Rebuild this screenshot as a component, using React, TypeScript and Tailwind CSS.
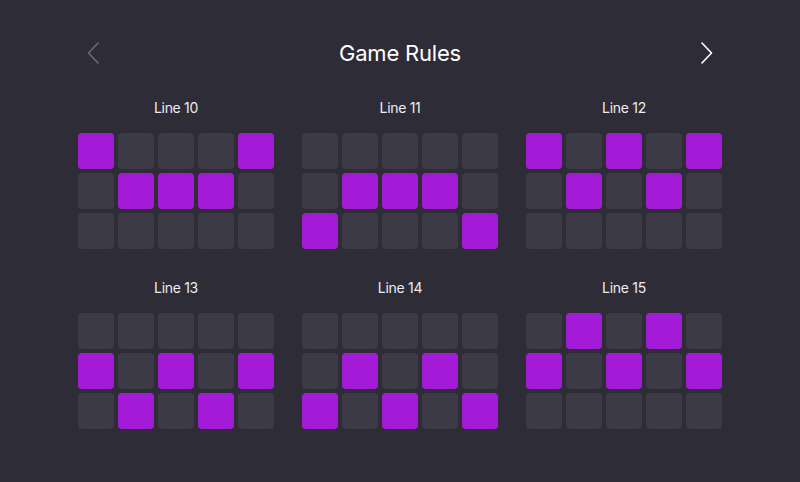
import React from 'react';

const lines: { name: string; rows: number[][] }[] = [
  { name: 'Line 10', rows: [[1, 0, 0, 0, 1], [0, 1, 1, 1, 0], [0, 0, 0, 0, 0]] },
  { name: 'Line 11', rows: [[0, 0, 0, 0, 0], [0, 1, 1, 1, 0], [1, 0, 0, 0, 1]] },
  { name: 'Line 12', rows: [[1, 0, 1, 0, 1], [0, 1, 0, 1, 0], [0, 0, 0, 0, 0]] },
  { name: 'Line 13', rows: [[0, 0, 0, 0, 0], [1, 0, 1, 0, 1], [0, 1, 0, 1, 0]] },
  { name: 'Line 14', rows: [[0, 0, 0, 0, 0], [0, 1, 0, 1, 0], [1, 0, 1, 0, 1]] },
  { name: 'Line 15', rows: [[0, 1, 0, 1, 0], [1, 0, 1, 0, 1], [0, 0, 0, 0, 0]] },
];

const Chevron: React.FC<{ dir: 'left' | 'right'; className?: string }> = ({ dir, className }) => (
  <svg width="12" height="22" viewBox="0 0 12 22" fill="none" className={className}>
    <path
      d={dir === 'left' ? 'M11 1 L1.5 11 L11 21' : 'M1 1 L10.5 11 L1 21'}
      stroke="currentColor"
      strokeWidth="1.6"
      strokeLinecap="round"
      strokeLinejoin="round"
    />
  </svg>
);

const LineCard: React.FC<{ name: string; rows: number[][] }> = ({ name, rows }) => (
  <div className="flex flex-col items-center">
    <div className="text-[14px] leading-5 font-normal text-[#ececf0] tracking-[-0.3px]">{name}</div>
    <div className="mt-[15px] grid grid-cols-5 gap-1">
      {rows.flat().map((on, i) => (
        <div
          key={i}
          className={on ? 'w-9 h-9 rounded-[4px] bg-[#a31bd6]' : 'w-9 h-9 rounded-[4px] bg-[#3b3a45]'}
        />
      ))}
    </div>
  </div>
);

const App: React.FC = () => {
  return (
    <div className="w-[800px] h-[482px] bg-[#2e2c37] flex flex-col items-center pt-[39px]" style={{ fontFamily: 'Inter, "Noto Sans", sans-serif' }}>
      <div className="w-[644px] flex items-center justify-between px-[9px]">
        <Chevron dir="left" className="text-[#6c6b76]" />
        <h1 className="text-[22px] leading-7 font-normal text-white tracking-[-0.2px]">Game Rules</h1>
        <Chevron dir="right" className="text-white" />
      </div>
      <div className="mt-[31px] grid grid-cols-3 gap-x-7 gap-y-[29px]">
        {lines.map((l) => (
          <LineCard key={l.name} name={l.name} rows={l.rows} />
        ))}
      </div>
    </div>
  );
};

export default App;
